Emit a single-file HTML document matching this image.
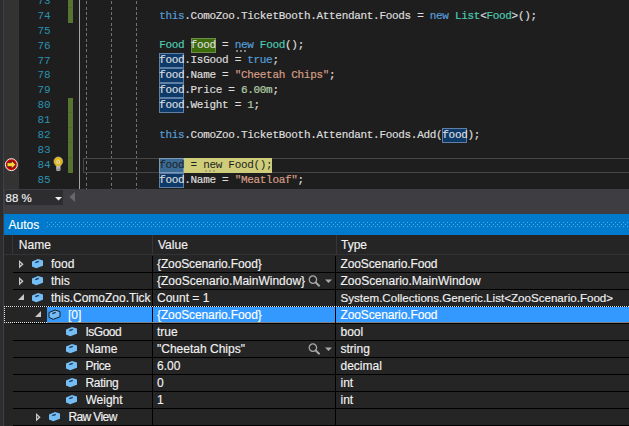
<!DOCTYPE html>
<html><head><meta charset="utf-8"><style>
*{margin:0;padding:0;box-sizing:border-box}
html,body{width:629px;height:426px;overflow:hidden;background:#2D2D30}
body{position:relative;font-family:"Liberation Sans",sans-serif}
.a{position:absolute}
#editor{position:absolute;left:0;top:0;width:629px;height:189px;background:#1E1E1E;overflow:hidden}
.ln{position:absolute;left:0;width:50.2px;height:15px;text-align:right;font-family:"Liberation Mono",monospace;font-size:11.0px;letter-spacing:-0.308px;line-height:15px;color:#2B91AF;white-space:pre}
.chg{position:absolute;left:68px;width:5px;background:#577430}
.guide{position:absolute;top:0;width:1px;height:189px;background:repeating-linear-gradient(to bottom,transparent 0 1.4px,#727272 1.4px 4.4px,transparent 4.4px 5.333px)}
.cl{position:absolute;left:83.6px;height:15px;font-family:"Liberation Mono",monospace;font-size:11.0px;letter-spacing:-0.308px;line-height:15px;color:#DCDCDC;white-space:pre;-webkit-text-stroke:0.2px currentColor}
.k{color:#569CD6}.t{color:#4EC9B0}.s{color:#D69D85}.n{color:#B5CEA8}
.ui{position:absolute;font-family:"Liberation Sans",sans-serif;font-size:12px;color:#F1F1F1;white-space:pre;line-height:16px;height:16px;-webkit-text-stroke:0.15px currentColor}
</style></head><body>
<div id="editor">
<div class="a" style="left:0;top:0;width:3px;height:189px;background:#2D2D30"></div>
<div class="a" style="left:3px;top:0;width:1px;height:189px;background:#3F3F46"></div>
<div class="a" style="left:4px;top:0;width:15px;height:189px;background:#333333"></div>
<div class="ln" style="top:-6px">73</div>
<div class="ln" style="top:9px">74</div>
<div class="ln" style="top:24px">75</div>
<div class="ln" style="top:39px">76</div>
<div class="ln" style="top:54px">77</div>
<div class="ln" style="top:68px">78</div>
<div class="ln" style="top:83px">79</div>
<div class="ln" style="top:98px">80</div>
<div class="ln" style="top:113px">81</div>
<div class="ln" style="top:128px">82</div>
<div class="ln" style="top:143px">83</div>
<div class="ln" style="top:158px">84</div>
<div class="ln" style="top:173px">85</div>
<svg class="a" style="left:4px;top:157px" width="15" height="15" viewBox="0 0 15 15"><circle cx="7.35" cy="7.65" r="6" fill="#E51400" stroke="#EDEDED" stroke-width="1"/><circle cx="7.35" cy="7.65" r="4.6" fill="#B00000"/><path d="M3.1,5.7 H7.5 V3.5 L11.7,7.65 L7.5,11.8 V9.6 H3.1 Z" fill="#FFD62E" stroke="#3A2440" stroke-width="0.7"/></svg>
<svg class="a" style="left:53px;top:156px" width="11" height="16" viewBox="0 0 11 16"><path d="M0.9,5.4 A4.4,4.4 0 1 1 9.7,5.4 C9.7,7.6 8,8.6 7.4,10.2 H3.2 C2.6,8.6 0.9,7.6 0.9,5.4 Z" fill="#E4B608" stroke="#BDBDBD" stroke-width="0.6"/><ellipse cx="5.2" cy="5.8" rx="1.9" ry="2.5" fill="#E9DCA8"/><path d="M4.3,4.6 L5.3,6 L6,4.6 M5.3,6 V8" stroke="#C9A21A" stroke-width="0.6" fill="none"/><rect x="3.2" y="10.2" width="4.2" height="4.6" rx="0.8" fill="#D8D8D8"/><rect x="3.2" y="11.7" width="4.2" height="0.7" fill="#6A6A6A"/><rect x="3.2" y="13.2" width="4.2" height="0.7" fill="#6A6A6A"/></svg>
<div class="chg" style="top:0;height:23px"></div>
<div class="chg" style="top:98px;height:75px"></div>
<div class="a" style="left:68px;top:7px;width:5px;height:1px;background:#4F6A2C"></div>
<div class="a" style="left:68px;top:112px;width:5px;height:1px;background:#4F6A2C"></div>
<div class="a" style="left:68px;top:127px;width:5px;height:1px;background:#4F6A2C"></div>
<div class="a" style="left:68px;top:142px;width:5px;height:1px;background:#4F6A2C"></div>
<div class="a" style="left:68px;top:157px;width:5px;height:1px;background:#4F6A2C"></div>
<div class="a" style="left:79px;top:0;width:1px;height:189px;background:#A5A5A5"></div>
<div class="guide" style="left:86px"></div>
<div class="guide" style="left:111px"></div>
<div class="guide" style="left:136px"></div>
<div class="a" style="left:83px;top:158px;width:560px;height:15px;border:1px solid #464646"></div>
<div class="a" style="left:190.56px;top:38px;width:25.17px;height:15px;background:#3E6B0B;border:1px solid #6C8E4A;"></div>
<div class="a" style="left:159.10px;top:53px;width:25.17px;height:15px;background:#0E3A6A;border:1px solid #5F7FA5;"></div>
<div class="a" style="left:159.10px;top:68px;width:25.17px;height:15px;background:#0E3A6A;border:1px solid #5F7FA5;"></div>
<div class="a" style="left:159.10px;top:83px;width:25.17px;height:15px;background:#0E3A6A;border:1px solid #5F7FA5;"></div>
<div class="a" style="left:159.10px;top:98px;width:25.17px;height:15px;background:#0E3A6A;border:1px solid #5F7FA5;"></div>
<div class="a" style="left:159.10px;top:173px;width:25.17px;height:15px;background:#0E3A6A;border:1px solid #5F7FA5;"></div>
<div class="a" style="left:442.24px;top:128px;width:25.17px;height:15px;background:#0E3A6A;border:1px solid #5F7FA5;"></div>
<div class="a" style="left:159.10px;top:158px;width:25.17px;height:15px;background:#3A6A94;border:1px solid #7A9AB8;"></div>
<div class="a" style="left:184.27px;top:158px;width:88.09px;height:15px;background:#CFCD7A"></div>
<div class="cl" style="top:9px">            <span class="k">this</span>.ComoZoo.TicketBooth.Attendant.Foods = <span class="k">new</span> <span class="t">List</span>&lt;<span class="t">Food</span>&gt;();</div>
<div class="cl" style="top:38px">            <span class="t">Food</span> food = <span class="k">new</span> <span class="t">Food</span>();</div>
<div class="cl" style="top:53px">            food.IsGood = <span class="k">true</span>;</div>
<div class="cl" style="top:68px">            food.Name = <span class="s">"Cheetah Chips"</span>;</div>
<div class="cl" style="top:83px">            food.Price = <span class="n">6.00m</span>;</div>
<div class="cl" style="top:98px">            food.Weight = <span class="n">1</span>;</div>
<div class="cl" style="top:128px">            <span class="k">this</span>.ComoZoo.TicketBooth.Attendant.Foods.Add(food);</div>
<div class="cl" style="top:158px">            <span style="color:#1E1E1E;-webkit-text-stroke:0">food = new Food();</span></div>
<div class="cl" style="top:173px">            food.Name = <span class="s">"Meatloaf"</span>;</div>
<div class="a" style="left:236px;top:50px;width:2px;height:2px;background:#808080"></div>
<div class="a" style="left:240px;top:50px;width:2px;height:2px;background:#808080"></div>
<div class="a" style="left:244px;top:50px;width:2px;height:2px;background:#808080"></div>
<div class="a" style="left:205px;top:170px;width:2px;height:2px;background:#A8A67C"></div>
<div class="a" style="left:209px;top:170px;width:2px;height:2px;background:#A8A67C"></div>
<div class="a" style="left:213px;top:170px;width:2px;height:2px;background:#A8A67C"></div>
</div>
<div class="a" style="left:4px;top:189px;width:625px;height:25px;background:#3E3E42"></div>
<div class="a" style="left:0;top:189px;width:3px;height:237px;background:#2D2D30"></div>
<div class="a" style="left:3px;top:189px;width:1px;height:237px;background:#3F3F46"></div>
<div class="a" style="left:5px;top:190px;width:58px;height:15px;background:#2D2D30"></div>
<div class="ui" style="left:5.5px;top:189.5px;font-size:11.5px">88 %</div>
<svg class="a" style="left:55px;top:197px" width="7" height="4"><path d="M0,0H7L3.5,3.5Z" fill="#F1F1F1"/></svg>
<svg class="a" style="left:69px;top:192px" width="7" height="10"><path d="M6,0V10L0.5,5Z" fill="#68686B"/></svg>
<div class="a" style="left:4px;top:214px;width:625px;height:21px;background:#007ACC"></div>
<div class="ui" style="left:8.5px;top:217px;color:#FFFFFF">Autos</div>
<svg class="a" style="left:47px;top:222px" width="582" height="5"><defs><pattern id="gp" width="4" height="4" patternUnits="userSpaceOnUse"><rect x="0" y="0" width="1" height="1" fill="#5AA9E0"/><rect x="2" y="2" width="1" height="1" fill="#5AA9E0"/></pattern></defs><rect width="582" height="5" fill="url(#gp)"/></svg>
<div class="a" style="left:4px;top:235px;width:625px;height:191px;background:#252526"></div>
<div class="a" style="left:12px;top:235px;width:1px;height:19px;background:#36363A"></div>
<div class="a" style="left:152px;top:235px;width:1px;height:19px;background:#36363A"></div>
<div class="a" style="left:336px;top:235px;width:1px;height:19px;background:#36363A"></div>
<div class="a" style="left:4px;top:254px;width:625px;height:1px;background:#333337"></div>
<div class="ui" style="left:18.8px;top:236.5px">Name</div>
<div class="ui" style="left:158px;top:236.5px">Value</div>
<div class="ui" style="left:341px;top:236.5px">Type</div>
<div class="a" style="left:13px;top:272px;width:616px;height:1px;background:#000000"></div>
<div class="a" style="left:13px;top:289px;width:616px;height:1px;background:#000000"></div>
<div class="a" style="left:13px;top:306px;width:616px;height:1px;background:#000000"></div>
<div class="a" style="left:13px;top:323px;width:616px;height:1px;background:#000000"></div>
<div class="a" style="left:13px;top:340px;width:616px;height:1px;background:#000000"></div>
<div class="a" style="left:13px;top:357px;width:616px;height:1px;background:#000000"></div>
<div class="a" style="left:13px;top:374px;width:616px;height:1px;background:#000000"></div>
<div class="a" style="left:13px;top:391px;width:616px;height:1px;background:#000000"></div>
<div class="a" style="left:13px;top:408px;width:616px;height:1px;background:#000000"></div>
<div class="a" style="left:13px;top:425px;width:616px;height:1px;background:#000000"></div>
<div class="a" style="left:152px;top:256px;width:1px;height:170px;background:#000000"></div>
<div class="a" style="left:335px;top:256px;width:1px;height:170px;background:#000000"></div>
<div class="a" style="left:47px;top:307px;width:105px;height:16px;background:#3399FF"></div>
<div class="a" style="left:153px;top:307px;width:182px;height:16px;background:#3399FF"></div>
<div class="a" style="left:336px;top:307px;width:293px;height:16px;background:#3399FF"></div>
<svg class="a" style="left:4px;top:306px" width="625" height="17"><defs><pattern id="fd" width="2" height="2" patternUnits="userSpaceOnUse"><rect width="1" height="1" fill="#E6E6E6"/></pattern><pattern id="fo" width="2" height="2" patternUnits="userSpaceOnUse"><rect width="1" height="1" fill="#CC6600"/></pattern></defs><rect x="0" y="0" width="625" height="1" fill="url(#fd)"/><rect x="0" y="0" width="1" height="17" fill="url(#fd)"/><rect x="0" y="16" width="43" height="1" fill="url(#fd)"/><rect x="44" y="16" width="581" height="1" fill="url(#fo)"/></svg>
<svg class="a" style="left:18px;top:259px" width="7" height="11"><path d="M1,1 L5.6,5.2 L1,9.4 Z" fill="#C8C8C8"/><path d="M2.2,3.8 L3.6,5.2 L2.2,6.6 Z" fill="#252526"/></svg>
<svg class="a" style="left:32px;top:259px;overflow:visible" width="11" height="10" viewBox="0 0 11 10"><path d="M0,2.5 L6,0 L11,1.6 L11,6.8 L4.2,9.3 L0,7.4 Z" fill="#75BEF5" stroke="none" stroke-width="0"/><path d="M3.3,3.7 L6.8,2.3" stroke="#1F3550" stroke-width="1.4"/></svg>
<div class="ui" style="left:51px;top:256px;width:101px;overflow:hidden;color:#F1F1F1">food</div>
<div class="ui" style="left:157px;top:256px;color:#F1F1F1;letter-spacing:-0.12px">{ZooScenario.Food}</div>
<div class="ui" style="left:340.5px;top:256px;color:#F1F1F1;font-size:12px;letter-spacing:-0.12px">ZooScenario.Food</div>
<svg class="a" style="left:18px;top:276px" width="7" height="11"><path d="M1,1 L5.6,5.2 L1,9.4 Z" fill="#C8C8C8"/><path d="M2.2,3.8 L3.6,5.2 L2.2,6.6 Z" fill="#252526"/></svg>
<svg class="a" style="left:32px;top:276px;overflow:visible" width="11" height="10" viewBox="0 0 11 10"><path d="M0,2.5 L6,0 L11,1.6 L11,6.8 L4.2,9.3 L0,7.4 Z" fill="#75BEF5" stroke="none" stroke-width="0"/><path d="M3.3,3.7 L6.8,2.3" stroke="#1F3550" stroke-width="1.4"/></svg>
<div class="ui" style="left:51px;top:273px;width:101px;overflow:hidden;color:#F1F1F1">this</div>
<div class="ui" style="left:157px;top:273px;color:#F1F1F1">{ZooScenario.MainWindow}</div>
<div class="ui" style="left:340.5px;top:273px;color:#F1F1F1;font-size:12px">ZooScenario.MainWindow</div>
<svg class="a" style="left:308px;top:274.6px" width="14" height="12"><circle cx="4.9" cy="4.6" r="3.7" fill="none" stroke="#A8A8A8" stroke-width="1.3"/><path d="M7.5,7.3 L11.6,11.2" stroke="#A8A8A8" stroke-width="1.9"/></svg>
<svg class="a" style="left:325px;top:278.8px" width="8" height="5"><path d="M0,0.5H7L3.5,4Z" fill="#A8A8A8"/></svg>
<svg class="a" style="left:18.4px;top:294.2px" width="7" height="7"><path d="M6,0 L6,6 L0,6 Z" fill="#C8C8C8"/></svg>
<svg class="a" style="left:32px;top:293px;overflow:visible" width="11" height="10" viewBox="0 0 11 10"><path d="M0,2.5 L6,0 L11,1.6 L11,6.8 L4.2,9.3 L0,7.4 Z" fill="#75BEF5" stroke="none" stroke-width="0"/><path d="M3.3,3.7 L6.8,2.3" stroke="#1F3550" stroke-width="1.4"/></svg>
<div class="ui" style="left:51px;top:290px;width:101px;overflow:hidden;color:#F1F1F1">this.ComoZoo.Tick</div>
<div class="ui" style="left:157px;top:290px;color:#F1F1F1">Count = 1</div>
<div class="ui" style="left:340.5px;top:290px;color:#F1F1F1;font-size:11.6px">System.Collections.Generic.List&lt;ZooScenario.Food&gt;</div>
<svg class="a" style="left:35.4px;top:311.2px" width="7" height="7"><path d="M6,0 L6,6 L0,6 Z" fill="#C8C8C8"/></svg>
<svg class="a" style="left:48.5px;top:310px;overflow:visible" width="11" height="10" viewBox="0 0 11 10"><path d="M0,2.5 L6,0 L11,1.6 L11,6.8 L4.2,9.3 L0,7.4 Z" fill="#75BEF5" stroke="#1E1E1E" stroke-width="1"/><path d="M3.3,3.7 L6.8,2.3" stroke="#1F3550" stroke-width="1.4"/></svg>
<div class="ui" style="left:68.0px;top:307px;width:84.0px;overflow:hidden;color:#FFFFFF">[0]</div>
<div class="ui" style="left:157px;top:307px;color:#FFFFFF;letter-spacing:-0.12px">{ZooScenario.Food}</div>
<div class="ui" style="left:340.5px;top:307px;color:#FFFFFF;font-size:12px;letter-spacing:-0.12px">ZooScenario.Food</div>
<svg class="a" style="left:66px;top:327px;overflow:visible" width="11" height="10" viewBox="0 0 11 10"><path d="M0,2.5 L6,0 L11,1.6 L11,6.8 L4.2,9.3 L0,7.4 Z" fill="#75BEF5" stroke="none" stroke-width="0"/><path d="M3.3,3.7 L6.8,2.3" stroke="#1F3550" stroke-width="1.4"/></svg>
<div class="ui" style="left:85.5px;top:324px;width:66.5px;overflow:hidden;color:#F1F1F1;letter-spacing:-0.5px">IsGood</div>
<div class="ui" style="left:157px;top:324px;color:#F1F1F1">true</div>
<div class="ui" style="left:340.5px;top:324px;color:#F1F1F1;font-size:12px">bool</div>
<svg class="a" style="left:66px;top:344px;overflow:visible" width="11" height="10" viewBox="0 0 11 10"><path d="M0,2.5 L6,0 L11,1.6 L11,6.8 L4.2,9.3 L0,7.4 Z" fill="#75BEF5" stroke="none" stroke-width="0"/><path d="M3.3,3.7 L6.8,2.3" stroke="#1F3550" stroke-width="1.4"/></svg>
<div class="ui" style="left:85.5px;top:341px;width:66.5px;overflow:hidden;color:#F1F1F1">Name</div>
<div class="ui" style="left:157px;top:341px;color:#F1F1F1">"Cheetah Chips"</div>
<div class="ui" style="left:340.5px;top:341px;color:#F1F1F1;font-size:12px">string</div>
<svg class="a" style="left:308px;top:342.6px" width="14" height="12"><circle cx="4.9" cy="4.6" r="3.7" fill="none" stroke="#A8A8A8" stroke-width="1.3"/><path d="M7.5,7.3 L11.6,11.2" stroke="#A8A8A8" stroke-width="1.9"/></svg>
<svg class="a" style="left:325px;top:346.8px" width="8" height="5"><path d="M0,0.5H7L3.5,4Z" fill="#A8A8A8"/></svg>
<svg class="a" style="left:66px;top:361px;overflow:visible" width="11" height="10" viewBox="0 0 11 10"><path d="M0,2.5 L6,0 L11,1.6 L11,6.8 L4.2,9.3 L0,7.4 Z" fill="#75BEF5" stroke="none" stroke-width="0"/><path d="M3.3,3.7 L6.8,2.3" stroke="#1F3550" stroke-width="1.4"/></svg>
<div class="ui" style="left:85.5px;top:358px;width:66.5px;overflow:hidden;color:#F1F1F1;letter-spacing:-0.5px">Price</div>
<div class="ui" style="left:157px;top:358px;color:#F1F1F1">6.00</div>
<div class="ui" style="left:340.5px;top:358px;color:#F1F1F1;font-size:12px">decimal</div>
<svg class="a" style="left:66px;top:378px;overflow:visible" width="11" height="10" viewBox="0 0 11 10"><path d="M0,2.5 L6,0 L11,1.6 L11,6.8 L4.2,9.3 L0,7.4 Z" fill="#75BEF5" stroke="none" stroke-width="0"/><path d="M3.3,3.7 L6.8,2.3" stroke="#1F3550" stroke-width="1.4"/></svg>
<div class="ui" style="left:85.5px;top:375px;width:66.5px;overflow:hidden;color:#F1F1F1;letter-spacing:-0.3px">Rating</div>
<div class="ui" style="left:157px;top:375px;color:#F1F1F1">0</div>
<div class="ui" style="left:340.5px;top:375px;color:#F1F1F1;font-size:12px">int</div>
<svg class="a" style="left:66px;top:395px;overflow:visible" width="11" height="10" viewBox="0 0 11 10"><path d="M0,2.5 L6,0 L11,1.6 L11,6.8 L4.2,9.3 L0,7.4 Z" fill="#75BEF5" stroke="none" stroke-width="0"/><path d="M3.3,3.7 L6.8,2.3" stroke="#1F3550" stroke-width="1.4"/></svg>
<div class="ui" style="left:85.5px;top:392px;width:66.5px;overflow:hidden;color:#F1F1F1">Weight</div>
<div class="ui" style="left:157px;top:392px;color:#F1F1F1">1</div>
<div class="ui" style="left:340.5px;top:392px;color:#F1F1F1;font-size:12px">int</div>
<svg class="a" style="left:35px;top:412px" width="7" height="11"><path d="M1,1 L5.6,5.2 L1,9.4 Z" fill="#C8C8C8"/><path d="M2.2,3.8 L3.6,5.2 L2.2,6.6 Z" fill="#252526"/></svg>
<svg class="a" style="left:49px;top:412px;overflow:visible" width="11" height="10" viewBox="0 0 11 10"><path d="M0,2.5 L6,0 L11,1.6 L11,6.8 L4.2,9.3 L0,7.4 Z" fill="#75BEF5" stroke="none" stroke-width="0"/><path d="M3.3,3.7 L6.8,2.3" stroke="#1F3550" stroke-width="1.4"/></svg>
<div class="ui" style="left:68.4px;top:409px;width:83.6px;overflow:hidden;color:#F1F1F1;letter-spacing:-0.6px">Raw View</div>
</body></html>
